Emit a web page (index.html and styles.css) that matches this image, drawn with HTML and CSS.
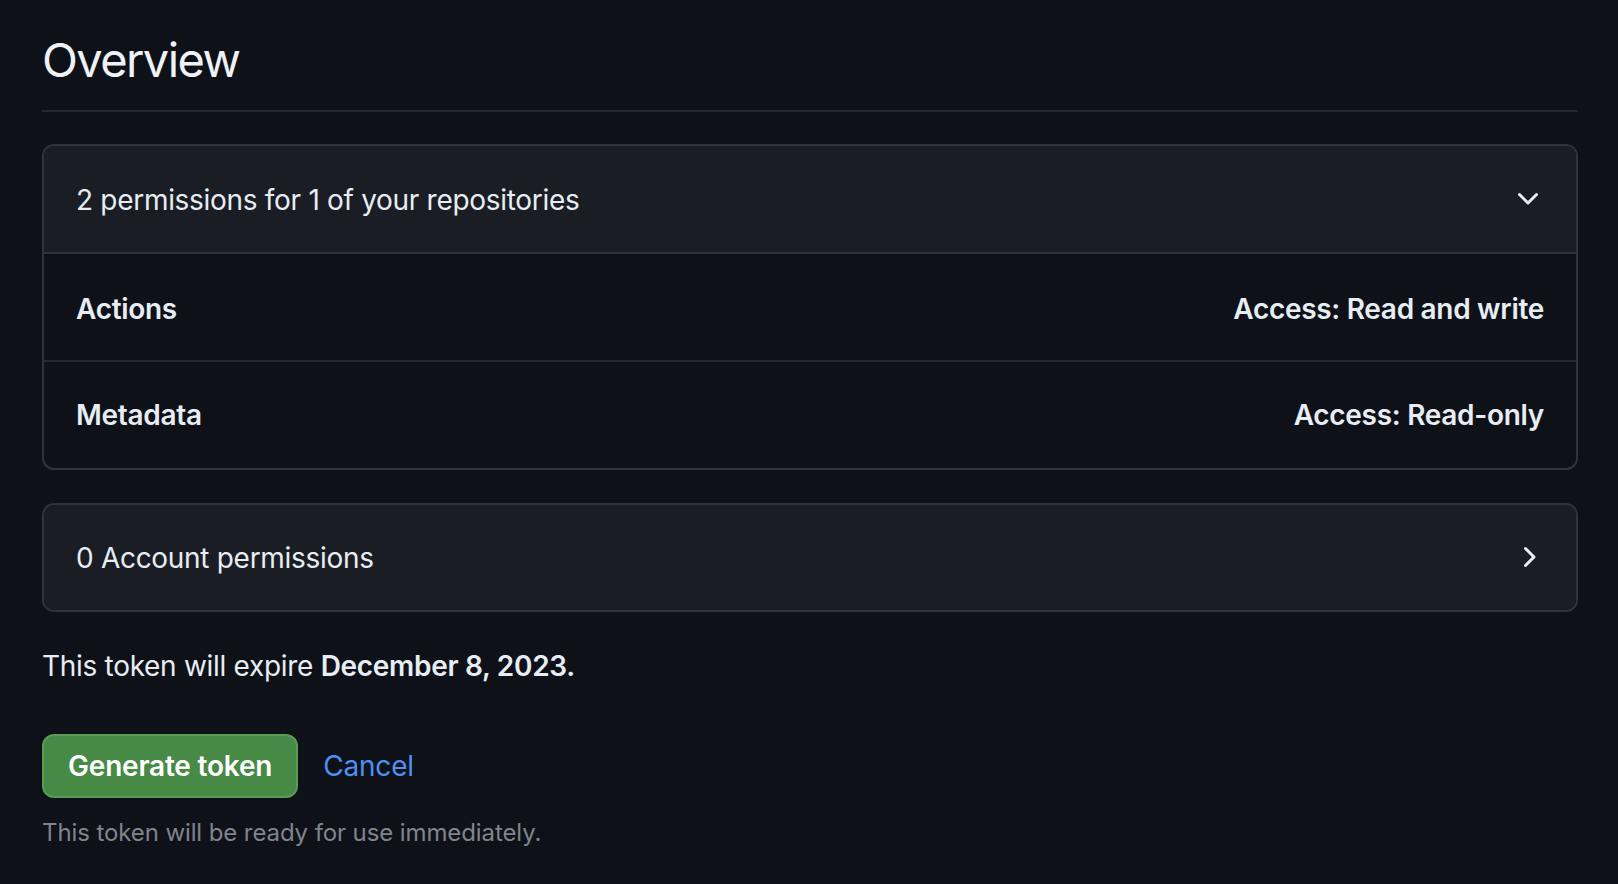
FILE: index.html
```html
<!DOCTYPE html>
<html lang="en">
<head>
<meta charset="utf-8">
<title>Overview</title>
<link rel="stylesheet" href="styles.css">
</head>
<body>
<main class="page">
  <div class="subhead">
    <h2 class="subhead-heading">Overview</h2>
  </div>

  <div class="box">
    <div class="box-header">
      <span class="header-title">2 permissions for 1 of your repositories</span>
      <svg class="chev" viewBox="0 0 16 16" width="32" height="32" aria-hidden="true"><path d="M12.78 5.22a.749.749 0 0 1 0 1.06l-4.25 4.25a.749.749 0 0 1-1.06 0L3.22 6.28a.749.749 0 1 1 1.06-1.06L8 8.939l3.72-3.719a.749.749 0 0 1 1.06 0Z"></path></svg>
    </div>
    <div class="box-row">
      <span class="row-name">Actions</span>
      <span class="row-access">Access: Read and write</span>
    </div>
    <div class="box-row">
      <span class="row-name">Metadata</span>
      <span class="row-access">Access: Read-only</span>
    </div>
  </div>

  <div class="box box-collapsed">
    <div class="box-header box-header-only">
      <span class="header-title">0 Account permissions</span>
      <svg class="chev" viewBox="0 0 16 16" width="32" height="32" aria-hidden="true"><path d="M6.22 3.22a.75.75 0 0 1 1.06 0l4.25 4.25a.75.75 0 0 1 0 1.06l-4.25 4.25a.751.751 0 0 1-1.042-.018.751.751 0 0 1-.018-1.042L9.94 8 6.22 4.28a.75.75 0 0 1 0-1.06Z"></path></svg>
    </div>
  </div>

  <p class="expire">This token will expire <strong>December 8, 2023.</strong></p>

  <div class="actions">
    <button class="btn-primary" type="button">Generate token</button>
    <a class="cancel" href="#">Cancel</a>
  </div>

  <p class="note">This token will be ready for use immediately.</p>
</main>
</body>
</html>
```

FILE: styles.css
```css
* {
  box-sizing: border-box;
}

html, body {
  margin: 0;
  padding: 0;
  background: #0e1117;
}

body {
  color: #e6edf3;
  font-family: Inter, "Noto Sans", "Liberation Sans", sans-serif;
  font-size: 28px;
  line-height: 40px;
  letter-spacing: -0.3px;
}

.page {
  padding: 30px 40px 0 42px;
}

.subhead {
  border-bottom: 2px solid #23272e;
  padding-bottom: 20px;
  margin-bottom: 32px;
}

.subhead-heading {
  margin: 0;
  font-size: 47px;
  font-weight: 400;
  line-height: 60px;
  letter-spacing: -1.6px;
  color: #eef1f5;
}

.box {
  border: 2px solid #30343a;
  border-radius: 12px;
  overflow: hidden;
}

.box-collapsed {
  margin-top: 33px;
}

.box-header {
  display: flex;
  align-items: center;
  justify-content: space-between;
  background: #1a1d23;
  padding: 34px 32px 32px;
  border-bottom: 2px solid #30343a;
}

.box-header-only {
  border-bottom: 0;
  padding: 33px 32px 32px;
}

.header-title {
  font-weight: 400;
}

.chev {
  fill: #e6edf3;
  display: block;
  margin-top: -2px;
}

.box-row {
  display: flex;
  align-items: center;
  justify-content: space-between;
  padding: 35px 32px 31px;
  border-top: 2px solid #262a30;
  font-weight: 600;
}

.box-row:last-child {
  padding: 33px 32px 33px;
}

.box-header + .box-row {
  border-top: 0;
}

.expire {
  margin: 34px 0 0;
}

.expire strong {
  font-weight: 600;
}

.actions {
  display: flex;
  align-items: center;
  gap: 25px;
  margin-top: 48px;
}

.btn-primary {
  height: 64px;
  padding: 0 24px;
  border: 2px solid #5a9c55;
  border-radius: 12px;
  background: #468a46;
  color: #ffffff;
  font-family: inherit;
  font-size: 28px;
  font-weight: 600;
  line-height: 40px;
  letter-spacing: -0.2px;
}

.cancel {
  color: #4d8ff5;
  text-decoration: none;
  font-size: 28px;
  letter-spacing: -0.2px;
}

.note {
  margin: 17px 0 0;
  color: #7f858d;
  font-size: 24px;
  line-height: 36px;
  letter-spacing: -0.1px;
}
```
